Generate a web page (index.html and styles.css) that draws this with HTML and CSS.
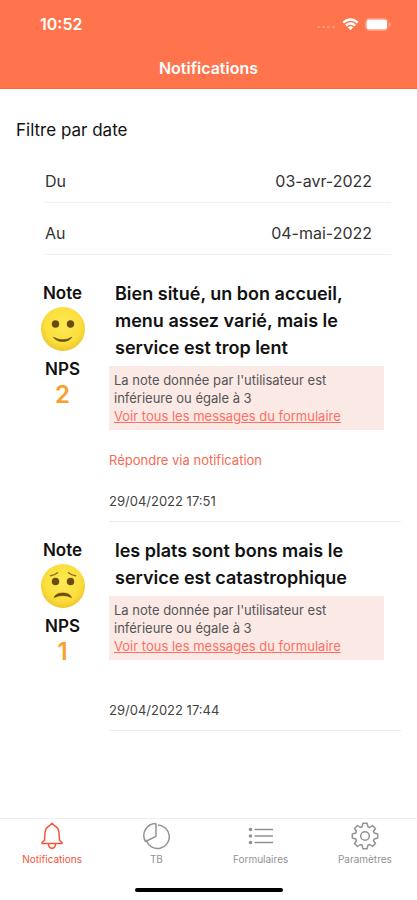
FILE: index.html
```html
<!DOCTYPE html>
<html lang="fr">
<head>
<meta charset="utf-8">
<meta name="viewport" content="width=device-width, initial-scale=1">
<title>Notifications</title>
<link rel="stylesheet" href="styles.css">
</head>
<body>
<svg class="defs" aria-hidden="true">
  <defs>
    <radialGradient id="face" cx="0.5" cy="0.42" r="0.58">
      <stop offset="0" stop-color="#fdea55"/>
      <stop offset="0.7" stop-color="#fbdf3c"/>
      <stop offset="1" stop-color="#efc62c"/>
    </radialGradient>
  </defs>
</svg>
<header class="header">
  <div class="status">
    <span class="clock">10:52</span>
    <div class="status-icons">
      <svg class="dots" viewBox="0 0 20 10" aria-hidden="true"><g fill="#fff" opacity="0.25"><rect x="1" y="7" width="3" height="2"/><rect x="6" y="7" width="3" height="2"/><rect x="11" y="7" width="3" height="2"/><rect x="16" y="7" width="3" height="2"/></g></svg>
      <svg class="wifi" viewBox="0 0 17 13" aria-hidden="true"><g fill="none" stroke="#fff" stroke-width="2.4"><path d="M1.2 4.6Q8.500-1.500 15.800 4.600"/><path d="M3.900 7.500Q8.500 3.600 13.100 7.500"/></g><path d="M5.700 9.300Q8.500 7 11.300 9.300L8.500 12.300Z" fill="#fff"/></svg>
      <svg class="battery" viewBox="0 0 26 13" aria-hidden="true"><rect x="0.500" y="0.500" width="22.500" height="12" rx="3.500" fill="none" stroke="#fff" opacity="0.25"/><rect x="1.500" y="1.500" width="20.500" height="10" rx="2.300" fill="#fff"/><path d="M24.200 4.300Q25.800 5 25.800 6.500T24.200 8.700Z" fill="#fff" opacity="0.4"/></svg>
    </div>
  </div>
  <h1 class="title">Notifications</h1>
</header>

<main class="content">
  <form class="filter">
    <h2 class="filter-title">Filtre par date</h2>
    <div class="field">
      <label for="from">Du</label>
      <input id="from" type="text" value="03-avr-2022">
    </div>
    <div class="field">
      <label for="to">Au</label>
      <input id="to" type="text" value="04-mai-2022">
    </div>
  </form>

  <section class="list">
    <article class="item">
      <div class="score">
        <span class="score-label">Note</span>
        <svg class="emoji" viewBox="0 0 44 44" aria-hidden="true">
          <circle cx="22" cy="22" r="22" fill="url(#face)"/>
          <g fill="#6a4b12"><ellipse cx="14.500" cy="17" rx="3.700" ry="3.800"/><ellipse cx="29.500" cy="17" rx="3.700" ry="3.800"/></g>
          <path d="M12.500 30.300Q22 35.300 30.800 30.300Q28 34.500 21.800 34.500T12.500 30.300Z" fill="#6a4b12" stroke="#6a4b12" stroke-width="0.700" stroke-linejoin="round"/>
        </svg>
        <span class="score-label">NPS</span>
        <strong class="nps">2</strong>
      </div>
      <div class="body">
        <h3 class="message">Bien situé, un bon accueil, menu assez varié, mais le service est trop lent</h3>
        <div class="alert">
          <p class="alert-text">La note donnée par l'utilisateur est inférieure ou égale à 3</p>
          <a class="alert-link" href="#messages-1">Voir tous les messages du formulaire</a>
        </div>
        <a class="reply" href="#reply-1">Répondre via notification</a>
        <time class="date" datetime="2022-04-29T17:51">29/04/2022 17:51</time>
      </div>
    </article>

    <article class="item">
      <div class="score">
        <span class="score-label">Note</span>
        <svg class="emoji" viewBox="0 0 44 44" aria-hidden="true">
          <circle cx="22" cy="22" r="22" fill="url(#face)"/>
          <g fill="#6a4b12"><ellipse cx="14.500" cy="17.500" rx="3.700" ry="3.800"/><ellipse cx="29.500" cy="17.500" rx="3.700" ry="3.800"/></g>
          <g fill="none" stroke="#8a6a1c" stroke-width="1.400" stroke-linecap="round"><path d="M9.500 11.700Q13.500 11.300 16.500 8.700"/><path d="M34.500 11.700Q30.500 11.300 27.500 8.700"/></g>
          <path d="M13 33.500Q15 29 21.800 29T30.500 33.500Q26.500 31.500 21.800 31.500T13 33.500Z" fill="#6a4b12" stroke="#6a4b12" stroke-width="0.700" stroke-linejoin="round"/>
        </svg>
        <span class="score-label">NPS</span>
        <strong class="nps">1</strong>
      </div>
      <div class="body">
        <h3 class="message">les plats sont bons mais le service est catastrophique</h3>
        <div class="alert">
          <p class="alert-text">La note donnée par l'utilisateur est inférieure ou égale à 3</p>
          <a class="alert-link" href="#messages-2">Voir tous les messages du formulaire</a>
        </div>
        <time class="date" datetime="2022-04-29T17:44">29/04/2022 17:44</time>
      </div>
    </article>
  </section>
</main>

<footer class="footer">
  <nav class="tabs">
    <a class="tab tab-active" href="#notifications">
      <svg class="tab-icon" viewBox="0 0 28 28" aria-hidden="true"><path d="M4 20.500L6.500 18.300L7 10.500Q7.700 5.500 11.500 3.800L14 1.300L16.500 3.800Q20.300 5.500 21 10.500L21.500 18.300L24 20.500V21.500H4ZM10.300 21.500Q10.700 26.300 14 26.300T17.700 21.500"/></svg>
      <span>Notifications</span>
    </a>
    <a class="tab" href="#tb">
      <svg class="tab-icon" viewBox="0 0 28 28" aria-hidden="true"><path d="M14 1.500V14.300L3.500 19.500A12 12 0 0 1 14 1.500"/><path d="M16 3A11.800 11.800 0 1 1 4.500 19"/></svg>
      <span>TB</span>
    </a>
    <a class="tab" href="#formulaires">
      <svg class="tab-icon" viewBox="0 0 28 28" aria-hidden="true"><path d="M7.500 7.500H26M7.500 14H26M7.500 20.500H26"/><g fill="currentColor" stroke="none"><circle cx="3.500" cy="7.500" r="1.800"/><circle cx="3.500" cy="14" r="1.800"/><circle cx="3.500" cy="20.500" r="1.800"/></g></svg>
      <span>Formulaires</span>
    </a>
    <a class="tab" href="#parametres">
      <svg class="tab-icon" viewBox="0 0 28 28" aria-hidden="true"><circle cx="14" cy="14" r="4.300"/><path d="M11.900 1.300H16.100L16.900 4.700L18.700 5.500L21.500 3.500L24.500 6.500L22.500 9.300L23.300 11.100L26.700 11.900V16.100L23.300 16.900L22.500 18.700L24.500 21.500L21.500 24.500L18.700 22.500L16.900 23.300L16.100 26.700H11.900L11.100 23.300L9.300 22.500L6.500 24.500L3.500 21.500L5.500 18.700L4.700 16.900L1.300 16.100V11.900L4.700 11.100L5.500 9.300L3.500 6.500L6.500 3.500L9.300 5.500L11.100 4.700Z"/></svg>
      <span>Paramètres</span>
    </a>
  </nav>
  <div class="home-bar"></div>
</footer>
</body>
</html>
```
FILE: styles.css
```css
* {
  box-sizing: border-box;
}

body {
  margin: 0;
  min-height: 100vh;
  display: flex;
  flex-direction: column;
  background: #fff;
  color: #111;
  font-family: Inter, "Liberation Sans", sans-serif;
}

h1, h2, h3, p {
  margin: 0;
}

a {
  color: inherit;
  text-decoration: none;
}

svg {
  display: block;
}

.defs {
  position: absolute;
  width: 0;
  height: 0;
}

.header {
  background: #ff734d;
  color: #fff;
  border-bottom: 1px solid #f4683c;
}

.status {
  display: flex;
  align-items: center;
  justify-content: space-between;
  height: 48px;
  padding: 0 26px 0 40px;
}

.clock {
  font-size: 16px;
  font-weight: 600;
}

.status-icons {
  display: flex;
  align-items: center;
  gap: 6px;
}

.dots {
  width: 20px;
  height: 10px;
}

.wifi {
  width: 17px;
  height: 13px;
}

.battery {
  width: 26px;
  height: 13px;
}

.title {
  height: 40px;
  line-height: 40px;
  font-size: 16px;
  font-weight: 600;
  text-align: center;
}

.content {
  flex: 1;
}

.filter {
  padding: 29px 26px 0 16px;
}

.filter-title {
  font-size: 17px;
  line-height: 24px;
  font-weight: 400;
  margin-bottom: 9px;
}

.field {
  display: flex;
  align-items: center;
  justify-content: space-between;
  height: 52px;
  margin-left: 29px;
  padding: 8px 19px 0 0;
  border-bottom: 1px solid #f0f0f0;
  font-size: 16px;
  color: #333;
}

.field input {
  flex: 1;
  min-width: 0;
  padding: 0;
  border: 0;
  background: none;
  font: inherit;
  color: inherit;
  text-align: right;
}

.list {
  padding: 10px 16px 24px 16px;
}

.item {
  display: flex;
  padding-top: 15px;
}

.score {
  width: 93px;
  display: flex;
  flex-direction: column;
  align-items: center;
}

.score-label {
  font-size: 17px;
  line-height: 27px;
  font-weight: 600;
}

.emoji {
  width: 44px;
  height: 44px;
  margin-bottom: 5px;
}

.nps {
  font-size: 24px;
  line-height: 24px;
  font-weight: 600;
  color: #f8a02c;
}

.body {
  flex: 1;
  min-width: 0;
  display: flex;
  flex-direction: column;
  align-items: flex-start;
  border-bottom: 1px solid #ececec;
}

.message {
  padding: 0 40px 0 6px;
  font-size: 18px;
  line-height: 27px;
  font-weight: 600;
}

.alert {
  align-self: stretch;
  margin: 5px 17px 0 0;
  padding: 5px;
  background: #fae9e5;
}

.alert-text {
  padding-right: 30px;
  font-size: 13px;
  line-height: 18px;
  color: #555;
}

.alert-link {
  display: block;
  font-size: 13px;
  line-height: 18px;
  color: #ff6f61;
  text-decoration: underline;
}

.reply {
  margin-top: 20px;
  margin-bottom: -19px;
  font-size: 13px;
  line-height: 20px;
  color: #f56a52;
}

.date {
  padding: 40px 0 10px;
  font-size: 13px;
  line-height: 20px;
  color: #444;
}

.footer {
  background: #fff;
  border-top: 1px solid #eee;
}

.tabs {
  display: grid;
  grid-template-columns: repeat(4, 1fr);
}

.tab {
  display: flex;
  flex-direction: column;
  align-items: center;
  gap: 1px;
  padding-top: 3px;
  font-size: 10px;
  line-height: 16px;
  color: #929292;
}

.tab-active {
  color: #f5543a;
}

.tab-icon {
  width: 28px;
  height: 28px;
  fill: none;
  stroke: currentColor;
  stroke-width: 1.5;
  stroke-linejoin: round;
}

.home-bar {
  width: 148px;
  height: 4px;
  margin: 21px auto 8px;
  border-radius: 2px;
  background: #000;
}
```
